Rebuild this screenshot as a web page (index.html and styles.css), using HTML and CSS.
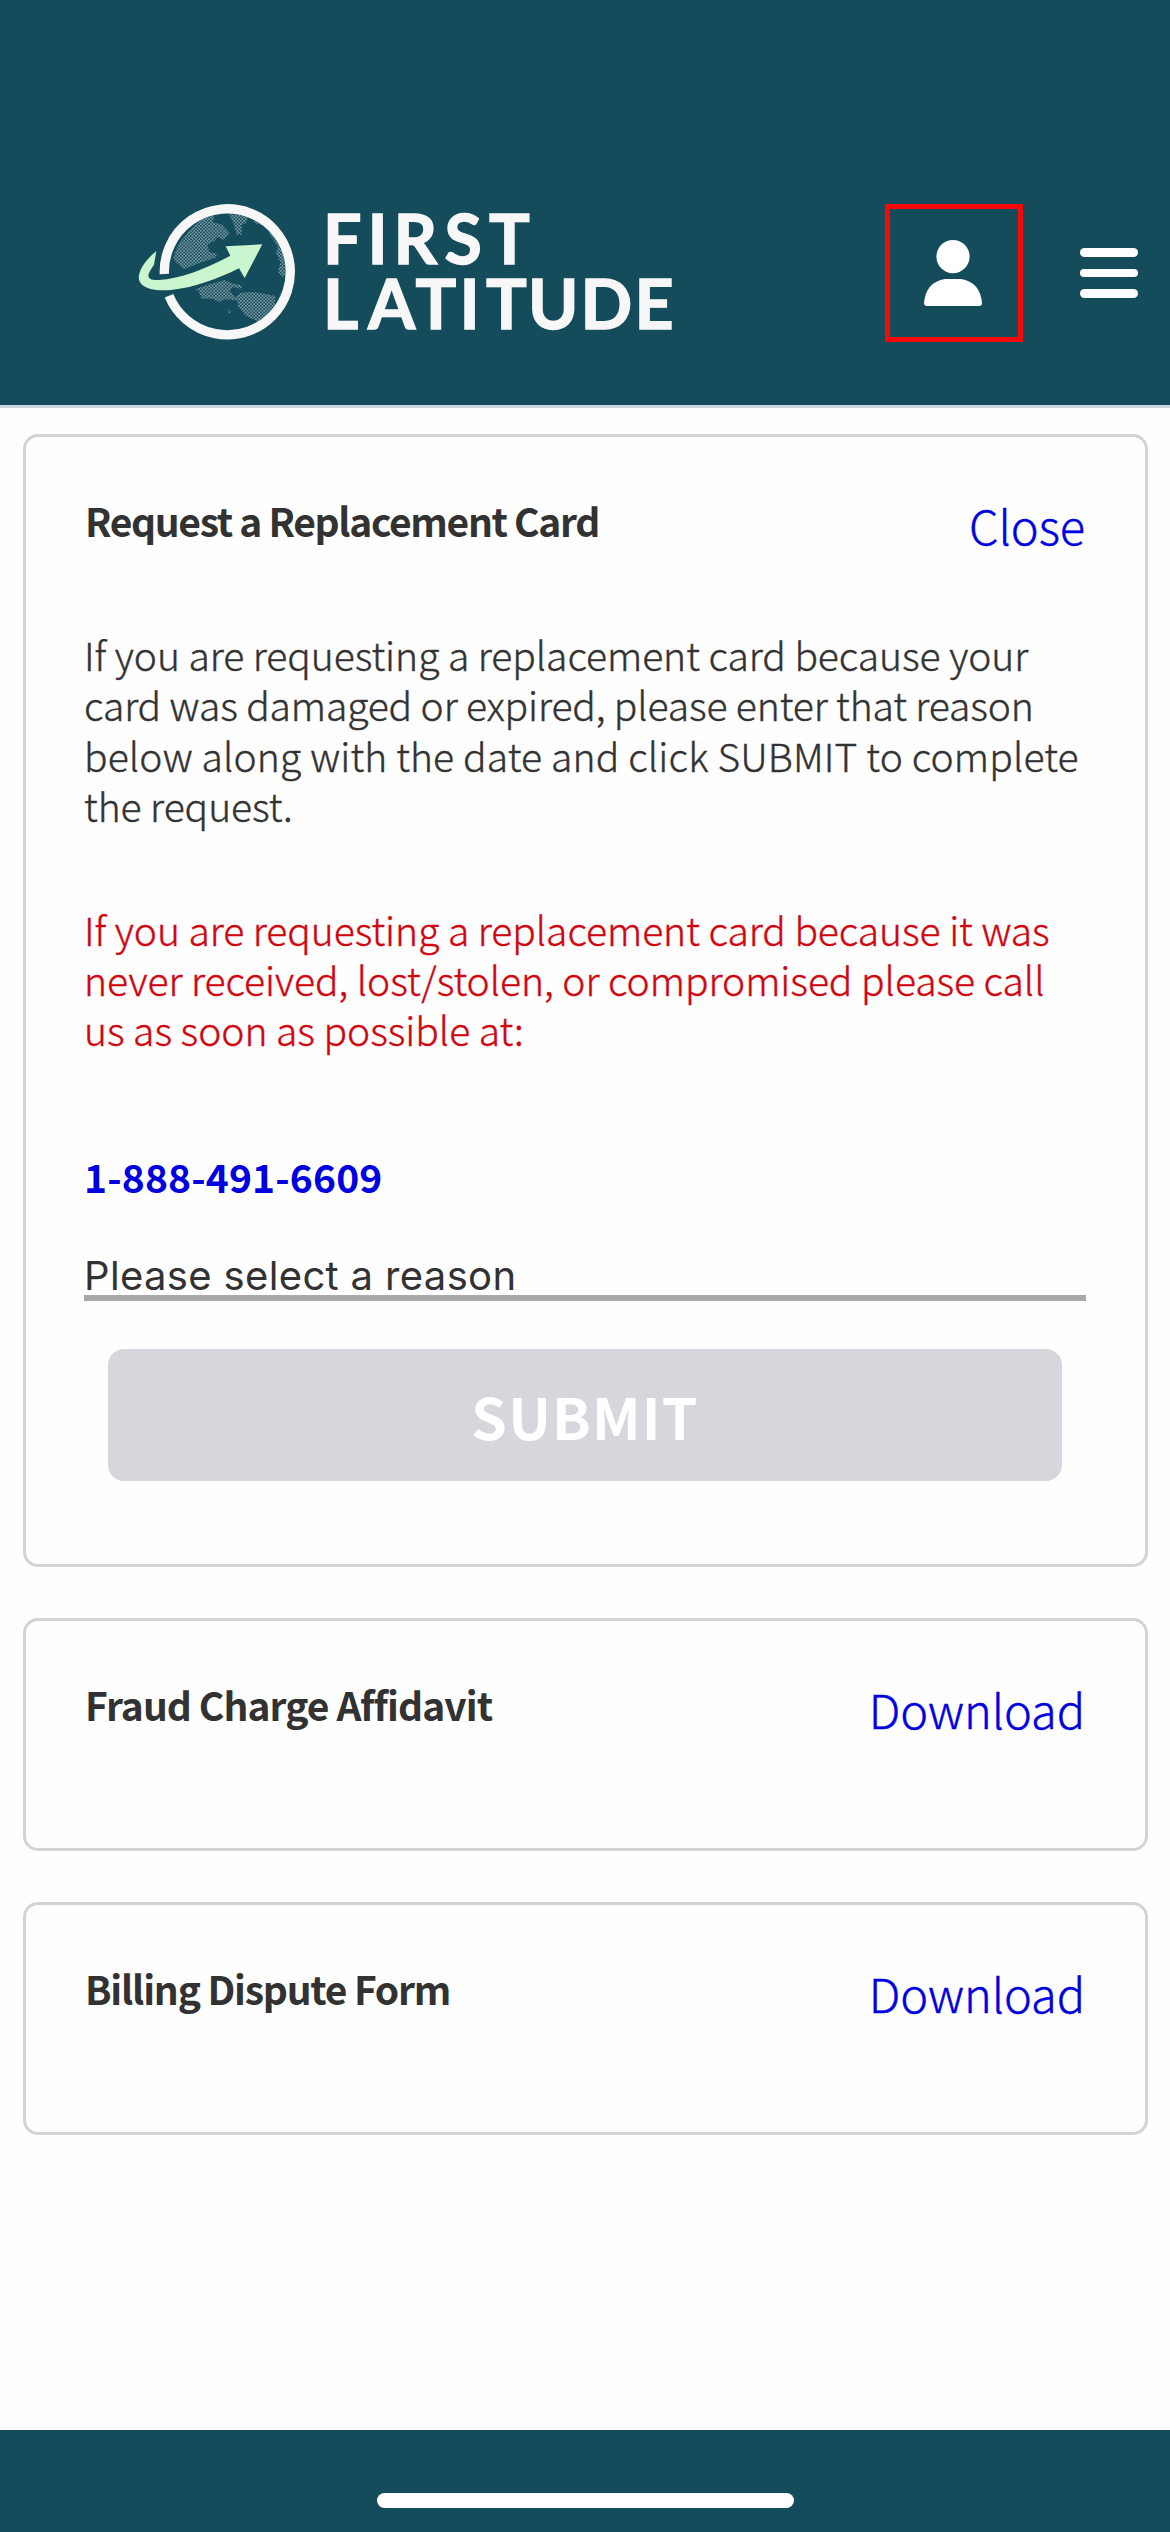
FILE: index.html
```html
<!DOCTYPE html>
<html lang="en">
<head>
<meta charset="utf-8">
<title>First Latitude</title>
<link rel="stylesheet" href="styles.css">
</head>
<body>
<header class="header">
  <svg class="logo" viewBox="0 0 560 160" role="img" aria-label="First Latitude">
    <defs>
      <pattern id="dots" width="10" height="10" patternUnits="userSpaceOnUse">
        <circle cx="2.5" cy="2.5" r="2.5"/><circle cx="7.5" cy="7.5" r="2.5"/>
      </pattern>
    </defs>
    <g transform="scale(.33333)">
      <g class="land">
        <path d="M160 200L178 158L212 118L250 84L284 76L278 96L306 104L328 128L312 150L292 142L282 154L262 164L268 186L292 192L284 204L236 220L192 238L164 214Z"/>
        <path d="M326 72L384 78L380 96L366 106L364 134L350 134L342 104Z"/>
        <path d="M396 90L430 104L410 102ZM446 122L472 152L490 190L498 246L490 262L474 246L482 216L468 190L474 168L452 138Z"/>
        <path d="M226 298L264 284L314 270L334 280L366 286L364 296L338 292L330 304L346 322L360 308L400 306L466 318L464 346L444 374L418 396L378 378L354 350L352 332L318 328L298 336L276 326L244 326L236 304ZM320 354L334 366L328 372Z"/>
      </g>
      <path class="ring" d="M133 252A189 189 0 1 1 147 317"/>
      <path class="arrow" d="M109 183C76 210 53 243 57 269C63 294 102 304 153 300C218 294 294 267 357 235L374 264L427 163L317 169L331 197C263 234 180 267 116 270C90 271 83 264 86 251C91 239 99 229 102 224Z"/>
    </g>
    <text class="wordmark" y="74" x="203 247.5 273.5 324.5 369">FIRST</text>
    <text class="wordmark" y="139" x="203 248 295.5 339.5 366 408 460.5 514.5">LATITUDE</text>
  </svg>
  <div class="actions">
    <button class="profile" aria-label="Profile">
      <svg viewBox="0 0 58 66"><circle cx="29" cy="16.6" r="16.6"/><path d="M21 39H37Q56 42 58 63Q58 66 55 66H3Q0 66 0 63Q2 42 21 39Z"/></svg>
    </button>
    <button class="menu" aria-label="Menu"><i></i><i></i><i></i></button>
  </div>
</header>
<main class="content">
  <section class="card card-request">
    <div class="card-head"><h2 class="title-long">Request a Replacement Card</h2><a class="link">Close</a></div>
    <p class="copy">If you are requesting a replacement card because your<br><span class="tight">card was damaged or expired, please enter that reason</span><br><span class="loose">below along with the date and click SUBMIT to complete</span><br>the request.</p>
    <p class="copy warning">If you are requesting a replacement card because it was<br>never received, lost/stolen, or compromised please call<br>us as soon as possible at:</p>
    <a class="phone">1-888-491-6609</a>
    <div class="reason">Please select a reason</div>
    <button class="submit">SUBMIT</button>
  </section>
  <section class="card">
    <div class="card-head"><h2 class="title-wide">Fraud Charge Affidavit</h2><a class="link">Download</a></div>
  </section>
  <section class="card">
    <div class="card-head"><h2>Billing Dispute Form</h2><a class="link">Download</a></div>
  </section>
</main>
<footer class="footer"><span class="home-bar"></span></footer>
</body>
</html>
```

FILE: styles.css
```css
* { box-sizing: border-box; }
body {
  margin: 0;
  height: 2532px;
  display: flex;
  flex-direction: column;
  background: #fefefe;
  color: #323232;
  font: 300 39px/50.3px "Noto Sans CJK JP", "Open Sans", sans-serif;
}
button { border: 0; padding: 0; background: none; }
.header {
  height: 408px;
  flex: none;
  padding: 190px 32px 0 126px;
  display: flex;
  justify-content: space-between;
  align-items: flex-start;
  background: #144c5c;
  border-bottom: 3px solid #cdd6dd;
}
.logo { width: 560px; height: 160px; margin-left: -6px; overflow: visible; }
.land { opacity: .6; }
.land path { fill: url(#dots); }
#dots circle { fill: #f7f7f7; }
.ring { fill: none; stroke: #f7f7f7; stroke-width: 28; }
.arrow { fill: #c9f5cf; }
.wordmark { font: 700 68px Lato, sans-serif; fill: #f7f7f7; stroke: #f7f7f7; stroke-width: 1.4; }
.actions { display: flex; align-items: center; gap: 57px; padding-top: 14px; }
.profile {
  width: 138px;
  height: 138px;
  border: 5px solid #f40808;
  display: flex;
  align-items: center;
  justify-content: center;
}
.profile svg { width: 58px; height: 66px; margin-left: -3px; fill: #fff; }
.menu { width: 58px; display: flex; flex-direction: column; gap: 12px; }
.menu i { height: 8.7px; border-radius: 5px; background: #fff; }
.content { flex: 1; padding: 25.5px 22.5px 0; display: flex; flex-direction: column; gap: 51px; }
.card {
  height: 233px;
  padding: 58.5px 58.5px 0;
  border: 3px solid #d3d3d3;
  border-radius: 15px;
}
.card-request { height: 1133px; }
.card-head { display: flex; justify-content: space-between; align-items: flex-start; white-space: nowrap; }
h2 { margin: 0 0 0 1px; font-size: 39px; font-weight: 700; letter-spacing: -1.2px; }
.title-long { letter-spacing: -1.35px; }
.title-wide { letter-spacing: -.95px; }
.link { margin-right: 1px; font-size: 47px; line-height: 60px; letter-spacing: -.1px; color: #0000e0; -webkit-text-stroke: .4px; }
.copy { margin: 74px 0 0; white-space: nowrap; letter-spacing: -.04px; -webkit-text-stroke: .4px; }
.tight { letter-spacing: -.12px; }
.loose { letter-spacing: .15px; }
.warning { margin-top: 73.5px; color: #cf0610; }
.phone { display: block; margin-top: 96.5px; font-weight: 700; letter-spacing: .15px; color: #0000e0; }
.reason {
  height: 50px;
  margin-top: 49.5px;
  font: 400 40px/49px Inter, sans-serif;
  letter-spacing: .35px;
  border-bottom: 6px solid #a9a9a9;
}
.submit {
  display: block;
  width: 954px;
  height: 132px;
  margin: 48px auto 0;
  border-radius: 16px;
  background: #d5d7dd;
  color: #fff;
  font: 700 57px/72px "Noto Sans CJK JP", sans-serif;
  letter-spacing: 1.2px;
}
.footer { height: 102px; flex: none; padding-top: 63px; background: #144c5c; }
.home-bar { display: block; width: 417px; height: 15px; margin: 0 auto; border-radius: 8px; background: #fff; }
```
